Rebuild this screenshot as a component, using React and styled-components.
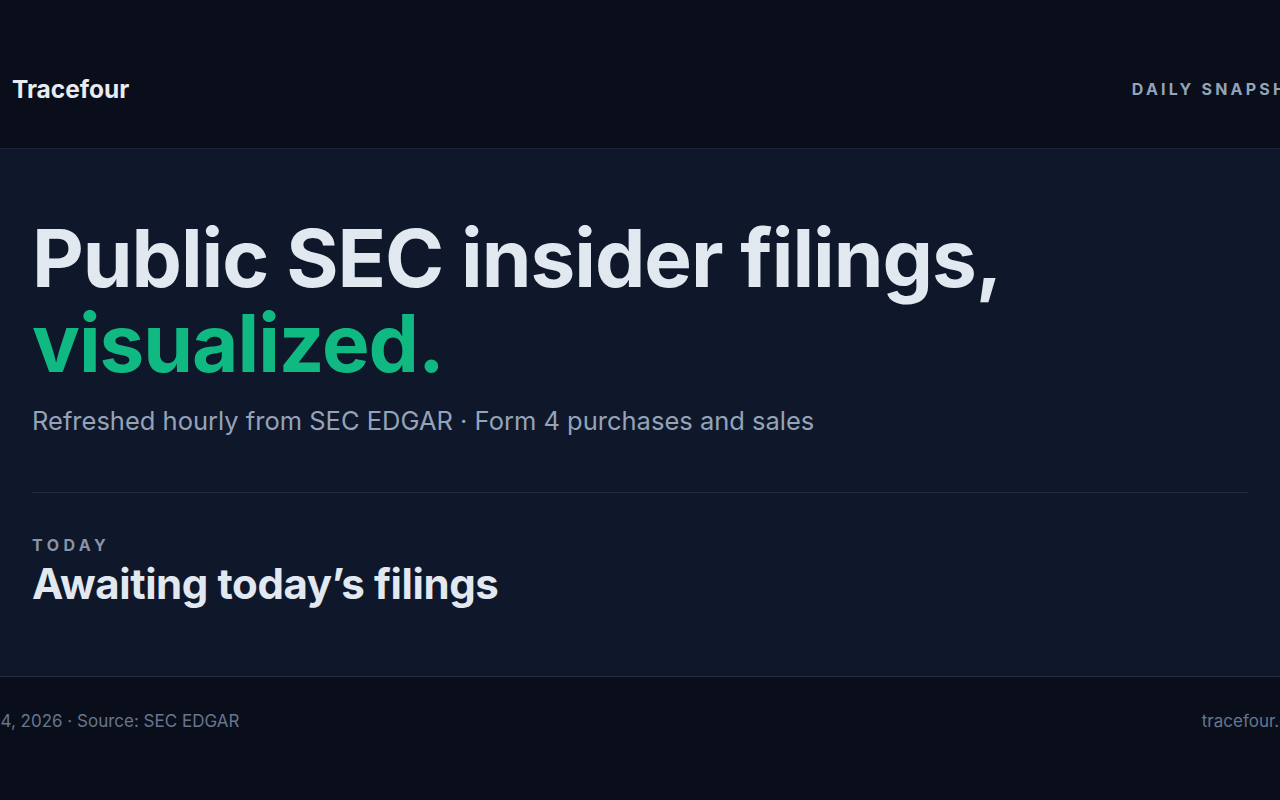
import React from 'react'
import styled, { createGlobalStyle } from 'styled-components'

const GlobalStyle = createGlobalStyle`
  html, body {
    margin: 0;
    padding: 0;
    background: #0a0e1a;
    overflow: hidden;
  }
  body {
    font-family: Inter, "Noto Sans", "Liberation Sans", sans-serif;
    -webkit-font-smoothing: antialiased;
  }
`

const Page = styled.div`
  display: flex;
  flex-direction: column;
  width: 1280px;
  height: 800px;
  overflow: hidden;
`

const Header = styled.header`
  flex: 0 0 148px;
  display: flex;
  align-items: center;
  background: #0a0e1a;
  border-bottom: 1px solid #1a2234;
`

const Bar = styled.div`
  flex: 0 0 auto;
  width: ${p => p.width}px;
  margin-left: ${p => p.offset || 0}px;
  padding: ${p => p.lift ? `0 12px ${p.lift}px` : `${p.drop || 0}px 12px 0`};
  display: flex;
  align-items: center;
  justify-content: space-between;
`

const Brand = styled.div`
  font-size: 24.5px;
  font-weight: 700;
  color: #e7ebf2;
  letter-spacing: 0;
`

const Tag = styled.div`
  font-size: 16px;
  font-weight: 700;
  letter-spacing: 0.2em;
  color: #94a3b8;
  text-transform: uppercase;
`

const Main = styled.main`
  flex: 1;
  background: #0f172a;
  padding: 66px 32px 0;
  display: flex;
  flex-direction: column;
`

const Title = styled.h1`
  margin: 0;
  font-size: 80px;
  line-height: 85px;
  font-weight: 700;
  letter-spacing: -0.013em;
  color: #e2e8f0;
`

const Accent = styled.span`
  color: #10b981;
`

const Lead = styled.p`
  margin: 19px 0 0;
  font-size: 25.5px;
  line-height: 34px;
  color: #94a3b8;
`

const Divider = styled.hr`
  margin: 54px 0 0;
  border: 0;
  border-top: 1px solid #1e293b;
`

const Section = styled.section`
  margin-top: 42px;
  display: flex;
  flex-direction: column;
  gap: 4px;
`

const Eyebrow = styled.div`
  font-size: 16px;
  font-weight: 700;
  letter-spacing: 0.28em;
  color: #8994a8;
  text-transform: uppercase;
`

const Status = styled.h2`
  margin: 0;
  font-size: 42px;
  line-height: 50px;
  font-weight: 700;
  letter-spacing: -0.01em;
  color: #e2e8f0;
`

const Footer = styled.footer`
  flex: 0 0 123px;
  display: flex;
  align-items: center;
  background: #0a0e1a;
  border-top: 1px solid #232c40;
`

const FootText = styled.div`
  font-size: 17px;
  color: #66768e;
`

export default function App() {
  return (
    <>
      <GlobalStyle />
      <Page>
        <Header>
          <Bar width={1305} drop={30}>
            <Brand>Tracefour</Brand>
            <Tag>Daily snapshot</Tag>
          </Bar>
        </Header>
        <Main>
          <Title>
            Public SEC insider filings,<br />
            <Accent>visualized.</Accent>
          </Title>
          <Lead>Refreshed hourly from SEC EDGAR · Form 4 purchases and sales</Lead>
          <Divider />
          <Section>
            <Eyebrow>Today</Eyebrow>
            <Status>Awaiting today’s filings</Status>
          </Section>
        </Main>
        <Footer>
          <Bar width={1428} offset={-126} lift={36}>
            <FootText>Updated Jan 14, 2026 · Source: SEC EDGAR</FootText>
            <FootText>tracefour.com</FootText>
          </Bar>
        </Footer>
      </Page>
    </>
  )
}
